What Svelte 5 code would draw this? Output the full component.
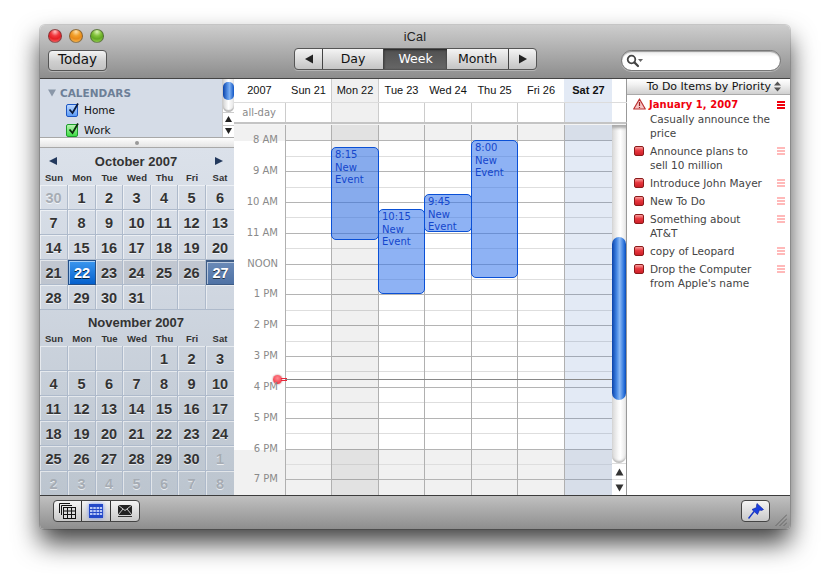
<script>
  const wd = ['Sun','Mon','Tue','Wed','Thu','Fri','Sat'];
  const range = (a,b,c='') => Array.from({length:b-a+1},(_,i)=>({d:a+i,c}));
  const blank = n => Array.from({length:n},()=>({d:'',c:''}));
  const octCells = [
    {d:30,c:'faded'},...range(1,20),
    {d:21,c:'wk'},{d:22,c:'wk cur'},{d:23,c:'wk'},{d:24,c:'wk'},{d:25,c:'wk'},{d:26,c:'wk'},{d:27,c:'wk sel'},
    ...range(28,31),...blank(3)];
  const novCells = [...blank(4),...range(1,30),{d:1,c:'faded'},...range(2,8,'faded')];
  const months = [{name:'October 2007',arrows:true,cells:octCells},{name:'November 2007',arrows:false,cells:novCells}];
  const days = [
    {l:'Sun 21',c:''},{l:'Mon 22',c:'mon'},{l:'Tue 23',c:''},{l:'Wed 24',c:''},{l:'Thu 25',c:''},{l:'Fri 26',c:''},{l:'Sat 27',c:'sat'}];
  const hours = ['8 AM','9 AM','10 AM','11 AM','NOON','1 PM','2 PM','3 PM','4 PM','5 PM','6 PM','7 PM'];
  const lineY = k => Math.round(140.3 + 15.41*k);
  const rows = [];
  let prev = 125;
  for (let k=0;k<=23;k++){
    const y = lineY(k);
    rows.push({h:y-prev+1, hour:k%2===0, label:k%2===0?hours[k/2]:'', off:k===0||k>20});
    prev = y+1;
  }
  const events = [
    {col:1,top:147,bottom:240,t:'8:15'},
    {col:2,top:209,bottom:294,t:'10:15'},
    {col:3,top:194,bottom:232,t:'9:45'},
    {col:4,top:140,bottom:278,t:'8:00'}];
  const todos = [
    {t:'Announce plans to sell 10 million',w:1},{t:'Introduce John Mayer'},{t:'New To Do'},
    {t:'Something about AT&T',w:1},{t:'copy of Leopard'},{t:"Drop the Computer from Apple's name",w:1}];
</script>

<div class="page">
<div class="window">
  <header class="toolbar">
    <div class="titlerow">
      <div class="lights"><span class="light red"></span><span class="light amber"></span><span class="light green"></span></div>
      <div class="title">iCal</div>
    </div>
    <div class="controls">
      <div class="left"><button class="btn">Today</button></div>
      <div class="seg">
        <button class="s arrow"><svg width="10" height="10" viewBox="0 0 10 10"><path d="M9 0.5V9.5L1 5z" fill="#222"/></svg></button>
        <button class="s day">Day</button>
        <button class="s week">Week</button>
        <button class="s month">Month</button>
        <button class="s arrow"><svg width="10" height="10" viewBox="0 0 10 10"><path d="M1 0.5V9.5L9 5z" fill="#222"/></svg></button>
      </div>
      <div class="right">
        <div class="search">
          <svg width="18" height="14" viewBox="0 0 18 14"><circle cx="5.5" cy="5.5" r="3.8" fill="none" stroke="#444" stroke-width="1.8"/><path d="M8.4 8.4L12 12" stroke="#444" stroke-width="2.2" stroke-linecap="round"/><path d="M12 5h5l-2.5 3z" fill="#666"/></svg>
        </div>
      </div>
    </div>
  </header>

  <main class="main">
    <aside class="sidebar">
      <section class="cals">
        <div class="callist">
          <div class="calhead"><svg width="8" height="8" viewBox="0 0 8 8"><path d="M0 0.5H8L4 7.5z" fill="#8a97a8"/></svg><span>CALENDARS</span></div>
          <div class="calrow"><span class="check home"><svg width="13" height="13" viewBox="0 0 13 13"><path d="M2.5 6.5L5.5 10L11 0.5" fill="none" stroke="#0c1c3c" stroke-width="1.8"/></svg></span>Home</div>
          <div class="calrow"><span class="check work"><svg width="13" height="13" viewBox="0 0 13 13"><path d="M2.5 6.5L5.5 10L11 0.5" fill="none" stroke="#0c2c0c" stroke-width="1.8"/></svg></span>Work</div>
        </div>
        <div class="miniscroll">
          <div class="minitrack"><div class="minithumb"></div></div>
          <div class="miniarrow"><svg width="7" height="6" viewBox="0 0 7 6"><path d="M3.5 0L7 6H0z" fill="#222"/></svg></div>
          <div class="miniarrow"><svg width="7" height="6" viewBox="0 0 7 6"><path d="M0 0H7L3.5 6z" fill="#222"/></svg></div>
        </div>
      </section>
      <div class="splitter"><i></i></div>
      <section class="minical">
        {#each months as m}
          <div class="mhead">
            <div class="mtitle">
              {#if m.arrows}<svg width="8" height="8" viewBox="0 0 8 8"><path d="M8 0V8L0 4z" fill="#23395d"/></svg>{/if}
              <span>{m.name}</span>
              {#if m.arrows}<svg width="8" height="8" viewBox="0 0 8 8"><path d="M0 0V8L8 4z" fill="#23395d"/></svg>{/if}
            </div>
            <div class="mgrid wds">{#each wd as w}<span>{w}</span>{/each}</div>
          </div>
          <div class="mgrid cells">{#each m.cells as c}<div class="cell {c.c}">{c.d}</div>{/each}</div>
        {/each}
      </section>
    </aside>

    <section class="cal">
      <div class="chead">
        <div class="hrow top">
          <div class="gut year">2007</div>
          <div class="dgrid">{#each days as d}<div class="dh {d.c}">{d.l}</div>{/each}</div>
          <div class="hsb"></div>
        </div>
        <div class="hrow allday">
          <div class="gut adl">all-day</div>
          <div class="dgrid">{#each days as d}<div class="ad {d.c}"></div>{/each}</div>
          <div class="hsb"></div>
        </div>
        <div class="sep"></div>
      </div>
      <div class="cbody">
        <div class="grid">
          {#each rows as r}
            <div class="row" class:off={r.off} style:height="{r.h}px">
              <div class="rgut">{#if r.label}<span class="hl">{r.label}</span>{/if}</div>
              <div class="rline" class:hour={r.hour}></div>
            </div>
          {/each}
          <div class="overlay dgrid">
            {#each days as d, i}
              <div class="col {d.c}">
                {#each events.filter(e=>e.col===i) as e}
                  <div class="event" style:top="{e.top-125}px" style:height="{e.bottom-e.top}px">
                    <div class="et">{e.t}</div>
                    <div>New<br>Event</div>
                  </div>
                {/each}
              </div>
            {/each}
          </div>
          <div class="now"><i class="dot"></i><i class="stem"></i><i class="nline"></i></div>
        </div>
        <div class="vscroll">
          <div class="vtrack"><div class="vthumb"></div></div>
          <div class="varrow"><svg width="9" height="8" viewBox="0 0 9 8"><path d="M4.5 0.5L8.5 7.5H0.5z" fill="#333"/></svg></div>
          <div class="varrow"><svg width="9" height="8" viewBox="0 0 9 8"><path d="M0.5 0.5H8.5L4.5 7.5z" fill="#333"/></svg></div>
        </div>
      </div>
    </section>

    <aside class="todo">
      <div class="thead">To Do Items by Priority <svg width="7" height="11" viewBox="0 0 7 11"><path d="M3.5 0.5L7 4.5H0zM0 6.5H7L3.5 10.5z" fill="#555"/></svg></div>
      <div class="titem first">
        <svg class="warn" width="13" height="12" viewBox="0 0 13 12"><path d="M6.5 1L12.3 11H0.7z" fill="#f6c6c6" stroke="#b33" stroke-width="1.2" stroke-linejoin="round"/><path d="M6.5 4v4M6.5 9v1" stroke="#922" stroke-width="1.2"/></svg>
        <div class="tdate">January 1, 2007</div>
        <span class="prio strong"><i></i><i></i><i></i></span>
      </div>
      <div class="ttext indent">Casually announce the price</div>
      {#each todos as t}
        <div class="titem">
          <span class="tbox"></span>
          <div class="ttext" class:narrow={t.w}>{t.t}</div>
          <span class="prio"><i></i><i></i><i></i></span>
        </div>
      {/each}
    </aside>
  </main>

  <footer class="bottom">
    <div class="seg3">
      <button aria-label="Overview"><svg width="18" height="16" viewBox="0 0 18 16"><g fill="none" stroke="#111"><path d="M0.5 0.5H11M2.5 2.5H13M0.5 0.5V10M2.5 2.5V12"/><rect x="4.5" y="4.5" width="12" height="11" fill="#ddd"/><path d="M4.5 8H16.5M4.5 11.5H16.5M8.5 4.5V15.5M12.5 4.5V15.5"/></g></svg></button>
      <button aria-label="Calendar"><svg class="glow" width="14" height="14" viewBox="0 0 14 14"><rect width="14" height="14" fill="#2348c8"/><g fill="#b9c8f5"><rect x="1" y="3" width="2.5" height="2"/><rect x="4.3" y="3" width="2.5" height="2"/><rect x="7.6" y="3" width="2.5" height="2"/><rect x="10.8" y="3" width="2.3" height="2"/><rect x="1" y="6" width="2.5" height="2"/><rect x="4.3" y="6" width="2.5" height="2"/><rect x="7.6" y="6" width="2.5" height="2"/><rect x="10.8" y="6" width="2.3" height="2"/><rect x="1" y="9" width="2.5" height="2"/><rect x="4.3" y="9" width="2.5" height="2"/><rect x="7.6" y="9" width="2.5" height="2"/><rect x="10.8" y="9" width="2.3" height="2"/></g></svg></button>
      <button aria-label="Mail"><svg width="14" height="12" viewBox="0 0 14 12"><rect width="14" height="10" fill="#222"/><path d="M0 0L7 5.5L14 0M0 10L5 4M14 10L9 4" fill="none" stroke="#ddd" stroke-width="0.9"/><rect y="11" width="14" height="1" fill="#333"/></svg></button>
    </div>
    <button class="pin" aria-label="Pin"><svg width="16" height="16" viewBox="0 0 16 16"><path d="M0.5 15.5L6 8.5" stroke="#1233c8" stroke-width="1.4"/><path d="M9 0.5L15.5 6.5L13.5 7.5L11.5 7L9.5 11.5L4 6.5L8.5 4.5L8.5 2.5z" fill="#1a3fe0" stroke="#0b1f9a" stroke-width="0.6"/></svg></button>
    <svg class="grip" width="12" height="12" viewBox="0 0 12 12"><path d="M0.5 12L12 0.5M4.5 12L12 4.5M8.5 12L12 8.5" stroke="#666" stroke-width="1"/></svg>
  </footer>
</div>
</div>

<style>
  :global(body){margin:0;background:#fff}
  *{box-sizing:border-box}
  button{font:inherit;margin:0;padding:0;color:inherit}
  .page{height:584px;padding:25px 40px 0;overflow:hidden}
  .window{width:750px;height:504px;border-radius:5px 5px 4px 4px;overflow:hidden;display:flex;flex-direction:column;font-family:"DejaVu Sans",sans-serif;color:#222;box-shadow:0 14px 26px rgba(0,0,0,.75),0 0 0 1px rgba(0,0,0,.15);}
  .toolbar{height:54px;flex:none;background:linear-gradient(#cdcdcd,#8d8d8d);border-bottom:1px solid #444;position:relative}
  .titlerow{height:23px;position:relative;display:flex;justify-content:center;align-items:center;padding-top:1px}
  .title{font:12.5px/1 "Liberation Sans",sans-serif;color:#222;letter-spacing:.2px;padding-top:1px}
  .lights{position:absolute;left:8px;top:4px;display:flex;gap:7px}
  .light{width:14px;height:14px;border-radius:50%;border:1px solid rgba(60,60,60,.55)}
  .red{background:radial-gradient(circle at 50% 15%,#ffc0c0 0,#f23a40 35%,#e41f24 60%,#ff7a7a)}
  .amber{background:radial-gradient(circle at 50% 15%,#ffe0a8 0,#f2a02a 35%,#e88a18 60%,#ffcb6a)}
  .green{background:radial-gradient(circle at 50% 15%,#dcf5b4 0,#84c33c 35%,#62a822 60%,#a8e060)}
  .controls{display:grid;grid-template-columns:254px 243px 1fr;align-items:flex-start}
  .left{padding:2px 0 0 8px}
  .btn{width:59px;height:21px;border:1px solid #555;border-radius:4px;background:linear-gradient(#f4f4f4,#cfcfcf 55%,#c2c2c2);font:13.5px/17px "DejaVu Sans",sans-serif;color:#111;box-shadow:0 1px 0 rgba(255,255,255,.3);display:flex;align-items:flex-start;justify-content:center}
  .seg{display:flex;height:22px;border:1px solid #555;border-radius:4px;overflow:hidden;background:linear-gradient(#f4f4f4,#c4c4c4);box-shadow:0 1px 0 rgba(255,255,255,.3)}
  .s{border:0;border-right:1px solid #444;background:transparent;font:12.5px/20px "DejaVu Sans",sans-serif;color:#111;display:flex;align-items:center;justify-content:center}
  .s:last-child{border-right:0}
  .arrow{width:28px;flex:none}
  .arrow:last-child{flex:1}
  .day{width:61px}
  .week{width:63px;background:linear-gradient(#505050,#666);color:#fff;border-right:0;box-shadow:inset 0 1px 2px #222}
  .month{width:62px}
  .right{padding:2px 9px 0 84px}
  .search{height:21px;border-radius:11px;background:linear-gradient(#e8e8e8,#fff 30%);border:1px solid #777;box-shadow:inset 0 1px 1px rgba(0,0,0,.35),0 1px 0 rgba(255,255,255,.35);padding:3px 0 0 4px;display:flex}

  .main{height:417px;flex:none;display:flex;border-bottom:1px solid #3c3c3c;background:#fff}
  .sidebar{width:194px;flex:none;display:flex;flex-direction:column}
  .cals{height:59px;flex:none;background:#d5dce7;display:flex;border-bottom:1px solid #a8a8a8}
  .callist{flex:1;padding:6px 0 0 8px;min-width:0}
  .calhead{display:flex;align-items:center;gap:4px;font:bold 10.5px/14px "DejaVu Sans",sans-serif;color:#6d7f97;height:15px}
  .calrow{display:flex;align-items:center;font-size:10.5px;height:20px;padding-left:18px;gap:6px;color:#111}
  .check{width:12px;height:13px;border-radius:2px;display:block;position:relative;flex:none}
  .check svg{position:absolute;left:0;top:-2px}
  .home{background:linear-gradient(#bcd8ff,#5d9bf5);border:1px solid #1c56c4}
  .work{background:linear-gradient(#b8f5b0,#3fdc45);border:1px solid #1c9c2a}
  .miniscroll{width:12px;flex:none;background:#fff;display:flex;flex-direction:column;border-left:1px solid #ccc}
  .minitrack{height:33px;background:linear-gradient(90deg,#d4d4d4,#fff 50%,#e4e4e4);border-radius:0 0 6px 6px;flex:none;box-shadow:inset 0 -2px 1px #bbb}
  .minithumb{height:18px;margin-top:3px;border-radius:5px;background:linear-gradient(90deg,#0a42a8,#5d98ea 45%,#7fb0f0 60%,#0f55c6);}
  .miniarrow{height:12px;border-top:1px solid #ccc;display:flex;align-items:center;justify-content:center;flex:1}
  .splitter{height:10px;flex:none;background:linear-gradient(#fdfdfd,#e4e4e4);border-bottom:1px solid #a8a8a8;display:flex;align-items:center;justify-content:center}
  .splitter i{width:4px;height:4px;border-radius:50%;background:#999}
  .minical{flex:1;min-height:0;overflow:hidden;padding-top:1px;background:linear-gradient(#dbe1ea,#d0d7e1 40%,#bcc5cf)}
  .mhead{height:36px}
  .mtitle{display:flex;justify-content:space-between;align-items:center;height:24px;padding:0 11px 0 9px;font:bold 13px/1 "Liberation Sans",sans-serif;color:#333}
  .mtitle span{flex:1;text-align:center}
  .mgrid{display:grid;grid-template-columns:28px 28px 27px 28px 27px 28px 28px}
  .wds{font:bold 9.5px/11px "Liberation Sans",sans-serif;color:#333;text-align:center;margin-top:-1px}
  .cells{grid-auto-rows:25px}
  .cell{border-right:1px solid #aebacb;border-bottom:1px solid #aebacb;box-shadow:inset 1px 1px 0 rgba(255,255,255,.55);font:bold 14.5px/24px "Liberation Sans",sans-serif;padding-top:1px;text-align:center;color:#333;text-shadow:0 1px 0 rgba(255,255,255,.7)}
  .cell:nth-child(7n){border-right:0}
  .faded{color:#a6acb4}
  .wk{background:rgba(90,90,100,.14)}
  .cur{background:linear-gradient(#3b97ef,#0560cc);color:#fff;border:1px solid #234f88;text-shadow:0 1px 0 #024;line-height:22px}
  .sel{background:linear-gradient(#6a8ab7,#4f72a5);color:#fff;border:1px solid #3e5c86;border-top-width:2px;text-shadow:0 1px 0 #234;line-height:21px}

  .cal{width:393px;flex:none;display:flex;flex-direction:column;min-width:0}
  .chead{flex:none}
  .hrow{display:flex}
  .gut{width:51px;flex:none}
  .dgrid{display:grid;grid-template-columns:46px 47px 46px 47px 46px 47px 48px;width:327px;flex:none}
  .hsb{flex:1;border-right:1px solid #999}
  .top{height:24px;border-bottom:1px solid #dcdcdc;font:11px/23px "Liberation Sans",sans-serif;color:#111;text-align:center}
  .dh{border-left:1px solid transparent}
  .dh.mon{background:#f0f0f0;border-left-color:#ccc;border-right:1px solid #ccc;margin-right:-1px}
  .dh.sat{background:#e3eaf5;font-weight:bold}
  .allday{height:19px}
  .adl{font:10px/19px "DejaVu Sans",sans-serif;color:#8a8a8a;text-align:right;padding-right:9px}
  .ad{border-left:1px solid #ccc}
  .ad.mon{background:#f0f0f0}
  .ad.sat{background:#e3eaf5}
  .sep{height:3px;border-top:2px solid #c4c4c4;background:#f4f4f4;border-right:1px solid #999}

  .cbody{height:370px;display:flex}
  .grid{width:378px;flex:none;position:relative;overflow:hidden}
  .row{display:flex;background:#fff}
  .row.off{background:#f1f1f1}
  .rgut{width:51px;flex:none;display:flex;justify-content:flex-end;align-items:flex-end;padding-right:7px}
  .hl{font:10px/12px "DejaVu Sans",sans-serif;color:#8a8a8a;margin-bottom:-5px;position:relative;z-index:1}
  .rline{flex:1;border-bottom:1px solid #dedede}
  .rline.hour{border-bottom-color:#b4b4b4}
  .overlay{position:absolute;left:51px;top:0;bottom:0}
  .col{border-left:1px solid #b0b0b0;position:relative}
  .col.mon{background:rgba(0,0,0,.06)}
  .col.sat{background:rgba(68,115,188,.15)}
  .event{position:absolute;left:-1px;right:-1px;border:1px solid #0a50d6;border-radius:5px;background:rgba(50,115,235,.55);font:10px/12px "DejaVu Sans",sans-serif;color:#1446cc;padding:1px 0 0 3px;overflow:hidden;z-index:1}
  .et{margin-bottom:1px}
  .now{position:absolute;left:39px;top:250px;width:339px;height:9px}
  .dot{position:absolute;left:0;top:0;width:9px;height:9px;border-radius:50%;background:radial-gradient(circle at 50% 35%,#ff8a92,#ee2030);box-shadow:0 0 2px rgba(120,0,0,.6)}
  .stem{position:absolute;left:8px;top:3px;width:6px;height:3px;border:1px solid #e8283a;border-left:0}
  .nline{position:absolute;left:12px;right:0;top:4px;height:1px;background:#888}
  .vscroll{flex:1;display:flex;flex-direction:column;border-right:1px solid #999;background:#fff}
  .vtrack{height:338px;flex:none;background:linear-gradient(90deg,#d6d6d6,#f8f8f8 45%,#fff 60%,#e6e6e6);border-radius:0 0 7px 7px;box-shadow:inset 0 -3px 2px -1px #bbb,inset 0 5px 3px -2px #aaa;padding-top:112px}
  .vthumb{height:163px;border-radius:7px;background:linear-gradient(90deg,#0a42a8,#3d80e0 30%,#8bb9f4 55%,#2d74dc 85%,#0a4cb8)}
  .varrow{height:16px;border-top:1px solid #ddd;display:flex;align-items:center;justify-content:center}

  .todo{flex:1;min-width:0;background:#fff;font-size:10.5px;line-height:14px;color:#444}
  .thead{height:16px;border-bottom:1px solid #aaa;background:linear-gradient(#fff,#f0f0f0 40%,#d0d0d0);font:11px/15px "DejaVu Sans",sans-serif;color:#111;display:flex;align-items:center;justify-content:flex-end;gap:3px;padding-right:9px;white-space:nowrap}
  .titem{display:flex;align-items:flex-start;padding:2px 5px 2px 7px;position:relative}
  .first{padding-top:3px;padding-bottom:0;padding-left:6px}
  .warn{flex:none}
  .tdate{color:#f0000c;font-weight:bold;font-size:10px;margin-left:3px;flex:1;white-space:nowrap;letter-spacing:.05px}
  .ttext{flex:1;min-width:0}
  .indent{padding:0 20px 2px 23px}
  .narrow{padding-right:16px}
  .tbox{width:10px;height:10px;border-radius:2px;background:linear-gradient(#f8a0a0,#e8383f 45%,#cc1f28);border:1px solid #8a1a1a;flex:none;margin:2px 6px 0 0}
  .prio{width:8px;flex:none;display:flex;flex-direction:column;gap:1px;margin-top:3px;margin-left:4px}
  .prio i{display:block;height:2px;background:#ffb9b9}
  .prio.strong i{background:#f0000c}

  .bottom{flex:1;background:linear-gradient(#c0c0c0,#8e8e8e);position:relative;display:flex;justify-content:space-between;align-items:flex-start;padding:4px 20px 0 13px}
  .seg3{display:flex;height:22px;border:1px solid #444;border-radius:4px;overflow:hidden;background:linear-gradient(#f4f4f4,#c8c8c8)}
  .seg3 button{border:0;background:transparent;border-right:1px solid #333;width:28px;display:flex;align-items:center;justify-content:center}
  .seg3 button:nth-child(2){width:29px}
  .seg3 button:last-child{border-right:0}
  .glow{filter:drop-shadow(0 0 2px #6d8cf0)}
  .pin{width:29px;height:22px;border:1px solid #444;border-radius:4px;background:linear-gradient(#f4f4f4,#c8c8c8);display:flex;align-items:center;justify-content:center}
  .grip{position:absolute;right:3px;bottom:3px}
</style>
